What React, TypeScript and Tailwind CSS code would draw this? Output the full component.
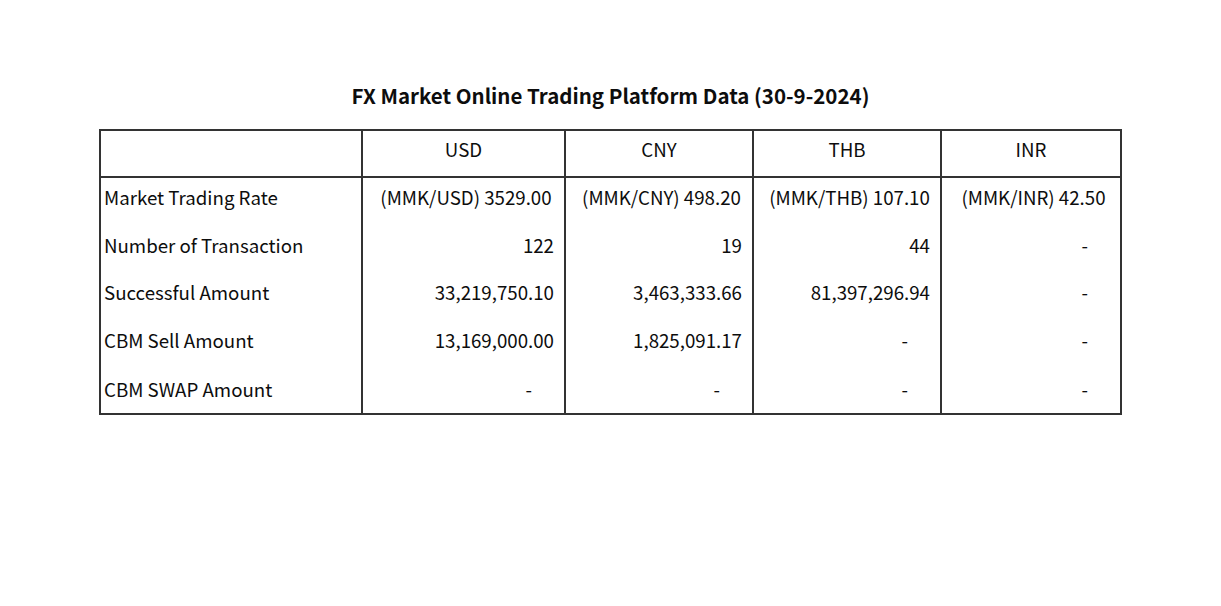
import React from "react";

const rows: { label: string; cells: string[]; center?: boolean; pad: string; h: string }[] = [
  {
    label: "Market Trading Rate",
    cells: ["(MMK/USD) 3529.00", "(MMK/CNY) 498.20", "(MMK/THB) 107.10", "(MMK/INR) 42.50"],
    center: true,
    pad: "pb-[8px]",
    h: "h-[47px]",
  },
  { label: "Number of Transaction", cells: ["122", "19", "44", "-"], pad: "pb-[5px]", h: "h-[47px]" },
  { label: "Successful Amount", cells: ["33,219,750.10", "3,463,333.66", "81,397,296.94", "-"], pad: "pb-[5px]", h: "h-[47px]" },
  { label: "CBM Sell Amount", cells: ["13,169,000.00", "1,825,091.17", "-", "-"], pad: "pb-[3px]", h: "h-[47px]" },
  { label: "CBM SWAP Amount", cells: ["-", "-", "-", "-"], pad: "pb-[1px]", h: "h-[49px]" },
];

const widths = ["w-[262px]", "w-[203px]", "w-[188px]", "w-[188px]", "w-[180px]"];

export default function App() {
  return (
    <div
      className="w-[1221px] h-[606px] bg-white text-[#0d0d0d] flex flex-col items-center"
      style={{ fontFamily: '"Noto Sans CJK SC", "Noto Sans", sans-serif' }}
    >
      <h1 className="mt-[81px] text-[20.5px] leading-[28px] font-bold text-center">
        FX Market Online Trading Platform Data (30-9-2024)
      </h1>
      <table className="mt-[20px] table-fixed border-collapse border-2 border-[#333] text-[18.7px] leading-[24px] w-[1021px]">
        <thead>
          <tr className="h-[47px] border-b-2 border-[#333]">
            <th className={`${widths[0]} border-r-2 border-[#333]`}></th>
            {["USD", "CNY", "THB", "INR"].map((c, i) => (
              <th
                key={c}
                className={`${widths[i + 1]} font-normal text-center align-middle pb-[10px] ${i < 3 ? "border-r-2 border-[#333]" : ""}`}
              >
                {c}
              </th>
            ))}
          </tr>
        </thead>
        <tbody>
          {rows.map((r) => (
            <tr key={r.label} className={r.h}>
              <td className={`border-r-2 border-[#333] pl-[3px] align-middle whitespace-nowrap ${r.pad}`}>{r.label}</td>
              {r.cells.map((c, i) => (
                <td
                  key={i}
                  className={`align-middle whitespace-nowrap ${r.pad} ${i < 3 ? "border-r-2 border-[#333]" : ""} ${
                    r.center ? "text-center pl-[5px]" : c === "-" ? "text-right pr-[32px]" : "text-right pr-[10px]"
                  }`}
                >
                  {c}
                </td>
              ))}
            </tr>
          ))}
        </tbody>
      </table>
    </div>
  );
}
